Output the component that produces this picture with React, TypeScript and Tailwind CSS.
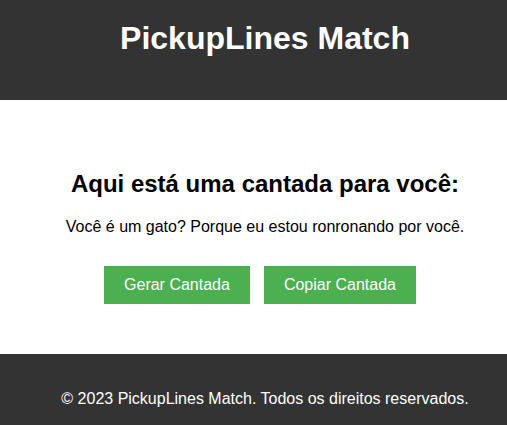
import { useState } from 'react';

const lines = [
  'Você é um gato? Porque eu estou ronronando por você.',
  'Você não é Google, mas tem tudo o que eu procuro.',
  'Se beleza fosse crime, você pegaria prisão perpétua.',
];

export default function App() {
  const [index, setIndex] = useState(0);

  return (
    <div className="min-h-[425px] flex flex-col bg-white text-black font-['Liberation_Sans',Arial,sans-serif]">
      {/* Header */}
      <header className="bg-[#333333] text-white text-center h-[100px] pt-[20px] pl-[23px]">
        <h1 className="text-[32px] font-bold leading-[37px]">PickupLines Match</h1>
      </header>

      {/* Main */}
      <main className="h-[254px] pt-[70px] text-center">
        <h2 className="pl-[23px] text-[24px] font-bold leading-[28px]">Aqui está uma cantada para você:</h2>
        <p className="pl-[23px] mt-[20px] text-[16px] leading-[18px]">{lines[index]}</p>
        <div className="mt-[30px] flex justify-center gap-[14px] pl-[13px]">
          <button
            type="button"
            className="bg-[#4caf50] text-white text-[16px] leading-[18px] px-[20px] py-[10px] whitespace-nowrap"
            onClick={() => setIndex((index + 1) % lines.length)}
          >
            Gerar Cantada
          </button>
          <button
            type="button"
            className="bg-[#4caf50] text-white text-[16px] leading-[18px] px-[20px] py-[10px] whitespace-nowrap"
            onClick={() => navigator.clipboard?.writeText(lines[index])}
          >
            Copiar Cantada
          </button>
        </div>
      </main>

      {/* Footer */}
      <footer className="flex-1 bg-[#333333] text-white text-center pt-[36px] pl-[23px]">
        <p className="text-[16px] leading-[18px]">© 2023 PickupLines Match. Todos os direitos reservados.</p>
      </footer>
    </div>
  );
}
